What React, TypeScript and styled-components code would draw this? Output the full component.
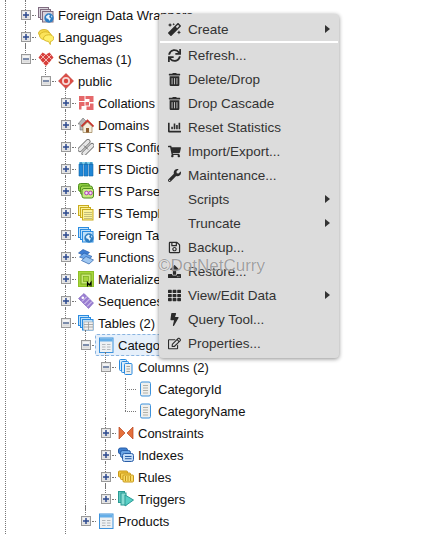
import React from "react";
import styled, { createGlobalStyle } from "styled-components";
import { FaMagic, FaSync, FaTrashAlt, FaChartBar, FaShoppingCart, FaWrench, FaRegSave, FaUpload, FaTh, FaBolt, FaRegEdit } from "react-icons/fa";

const Global = createGlobalStyle`
  html, body { margin: 0; padding: 0; height: 534px; overflow: hidden; background: #fff; }
  #root { height: 534px; }
`;

const Page = styled.div`
  position: relative;
  width: 426px;
  height: 534px;
  overflow: hidden;
  font-family: "Liberation Sans", Arial, sans-serif;
`;
const Tree = styled.div`
  margin-left: 5px;
  height: 534px;
  border-left: 1px dotted #777;
  padding: 4px 0 0 19px;
  box-sizing: border-box;
`;
const List = styled.ul`
  list-style: none;
  margin: 0;
  padding: 0;
`;
const SubList = styled(List)`
  margin-left: 20px;
`;
const Item = styled.li<{ $last?: boolean; $leaf?: boolean; $tail?: boolean }>`
  position: relative;
  padding-bottom: ${(p) => (p.$tail ? "30px" : "0")};
  &::before {
    content: "";
    position: absolute;
    left: 0;
    top: ${(p) => (p.$leaf ? "0" : "-4px")};
    ${(p) => (p.$last ? `height: ${p.$leaf ? 11 : 15}px;` : "bottom: 0;")}
    border-left: 1px dotted #777;
  }
`;
const Row = styled.div`
  position: relative;
  display: flex;
  align-items: center;
  height: 22px;
`;
const Toggle = styled.span<{ $open?: boolean }>`
  position: relative;
  flex: none;
  width: 10px;
  height: 10px;
  box-sizing: border-box;
  margin-left: -4px;
  border: 1px solid #999;
  background: linear-gradient(#fff, #d4d4d4);
  box-shadow: inset 0 0 0 1px #e6e6e6;
  &::before {
    content: "";
    position: absolute;
    left: 1px;
    top: 3px;
    width: 6px;
    height: 2px;
    background: ${(p) => (p.$open ? "#5a6f96" : "#2c4a8e")};
    transform: scaleY(0.75);
  }
  &::after {
    content: "";
    display: ${(p) => (p.$open ? "none" : "block")};
    position: absolute;
    left: 3px;
    top: 1px;
    width: 2px;
    height: 6px;
    background: #2c4a8e;
    transform: scaleX(0.75);
  }
`;
const Dots = styled.span<{ $leaf?: boolean }>`
  flex: none;
  width: ${(p) => (p.$leaf ? "11px" : "4px")};
  margin-left: ${(p) => (p.$leaf ? "0" : "1px")};
  margin-right: 2px;
  border-top: 1px dotted #777;
`;
const Label = styled.span<{ $selected?: boolean }>`
  display: flex;
  align-items: center;
  gap: 4px;
  height: 22px;
  box-sizing: border-box;
  padding: 0 2px;
  margin-left: -3px;
  border: 1px ${(p) => (p.$selected ? "dashed #8ab4e0" : "solid transparent")};
  background: ${(p) => (p.$selected ? "#e6f0fb" : "transparent")};
  border-radius: 2px;
  font-size: 13px;
  color: #111;
  white-space: nowrap;
`;
const Ico = styled.svg`
  flex: none;
  width: 16px;
  height: 16px;
  display: block;
`;

const Menu = styled.div`
  position: absolute;
  left: 159px;
  top: 14px;
  width: 180px;
  box-sizing: border-box;
  padding: 3px 0;
  background: #dcdcdc;
  border-radius: 4px;
  box-shadow: 0 1px 4px rgba(0, 0, 0, 0.45);
`;
const MenuItem = styled.div`
  display: flex;
  align-items: center;
  height: 24px;
  color: #333;
  font-size: 13.5px;
`;
const MenuIcon = styled.span`
  flex: none;
  width: 29px;
  padding-left: 1px;
  box-sizing: border-box;
  display: flex;
  justify-content: center;
  color: #2b2b2b;
  font-size: 13px;
`;
const MenuText = styled.span`
  flex: 1;
  white-space: nowrap;
`;
const Arrow = styled.span`
  flex: none;
  width: 0;
  height: 0;
  margin-right: 9px;
  border-left: 5px solid #333;
  border-top: 4px solid transparent;
  border-bottom: 4px solid transparent;
`;
const Divider = styled.div`
  height: 2px;
  margin: 0 1px;
  background: #fff;
`;
const Watermark = styled.div`
  position: absolute;
  left: 158px;
  top: 256px;
  font-size: 17px;
  line-height: 20px;
  color: rgba(120, 120, 120, 0.7);
  text-shadow: 0 0 1px rgba(255, 255, 255, 0.95);
  white-space: nowrap;
`;

const stack = (fill: string, stroke: string, inner?: React.ReactNode) => (
  <Ico viewBox="0 0 16 16">
    <rect x="0.5" y="0.5" width="10" height="10" fill={fill} stroke={stroke} />
    <rect x="2.5" y="2.5" width="10" height="10" fill={fill} stroke={stroke} />
    <rect x="4.5" y="4.5" width="10.5" height="10.5" fill={fill} stroke={stroke} />
    {inner}
  </Ico>
);
const globe = (
  <>
    <circle cx="11" cy="11" r="4.7" fill="#2f7fc4" />
    <path d="M8 9.5l2.5-2 1.5 1-1 1.6 1.8 1.4-1.3 2.6-1.2-2.2-2-.6zM13 8l1.500 2-1.200.4z" fill="#e6f2fb" />
  </>
);
const miniTable = (
  <>
    <rect x="6" y="7" width="9" height="8" fill="#f1f1f1" stroke="#aaa" strokeWidth="0.6" />
    <path d="M6 9.5h9M6 12h9M10.5 7v8" stroke="#999" strokeWidth="0.8" />
  </>
);
const tableIcon = (
  <Ico viewBox="0 0 16 16">
    <rect x="1.5" y="1" width="13.5" height="14.5" fill="#eef1f3" stroke="#3d92dc" />
    <rect x="2" y="1.5" width="12.5" height="3" fill="#64aee8" />
    <path d="M4 7.5h3.5M9 7.5h3.5M4 10h3.5M9 10h3.5M4 12.5h3.5M9 12.5h3.5" stroke="#b3b8bc" />
  </Ico>
);
const columnIcon = (
  <Ico viewBox="0 0 16 16">
    <rect x="2.5" y="1" width="10" height="14" rx="1.5" fill="#f0f0ee" stroke="#3d92dc" />
    <path d="M5 4.5h5M5 7h5M5 9.5h5M5 12h5" stroke="#b0b0a8" />
  </Ico>
);

const icons: Record<string, React.ReactNode> = {
  fdw: stack("#d9d4dc", "#7f6c80", globe),
  lang: (
    <Ico viewBox="0 0 16 16">
      <ellipse cx="6" cy="4.200" rx="5.500" ry="3.700" fill="#f5d94a" stroke="#d0ad1e" strokeWidth="0.8" />
      <ellipse cx="7.500" cy="6.800" rx="6" ry="4" fill="#fbe35a" stroke="#d0ad1e" strokeWidth="0.8" />
      <path d="M10.500 5.800c3-.3 5.200 1.200 5.200 3.400 0 1.800-1.400 3-3.200 3.300L12.300 15.500l-1.800-3C7.500 12.200 5.500 11 5.500 9.200c0-1.900 2.300-3.200 5-3.400z" fill="#fff06a" stroke="#d0ad1e" strokeWidth="0.8" />
    </Ico>
  ),
  schemas: (
    <Ico viewBox="0 0 16 16">
      <clipPath id="schemaClip">
        <path d="M4.500 1.500L8 3.500l3.500-2 4 5-3 3.500L8 15.500 3.500 10 .5 6.500z" />
      </clipPath>
      <path d="M4.500 1.500L8 3.500l3.500-2 4 5-3 3.500L8 15.500 3.500 10 .5 6.500z" fill="#d8403c" />
      <g clipPath="url(#schemaClip)" stroke="#f6c6c2" strokeWidth="0.9">
        <path d="M-2 5l12 12M1 2l12 12M4 -1l12 12M18 5L6 17M15 2L3 14M12 -1L0 11" />
      </g>
    </Ico>
  ),
  public: (
    <Ico viewBox="0 0 16 16">
      <path d="M8 .5L15.500 8 8 15.500.5 8z" fill="#dd4d45" stroke="#b8302c" strokeWidth="0.6" />
      <circle cx="8" cy="8" r="4" fill="#f6d9d6" />
      <circle cx="8" cy="8" r="2.200" fill="#d9453e" />
    </Ico>
  ),
  collations: (
    <Ico viewBox="0 0 16 16">
      <path d="M1 1h5.500v5H1zM7.500 1H15.500v6h-4V4h-4zM1 7h5.500v4H3.500v3.500H1zM7.500 7H11v3.500H7.500zM12 8.500h3.500V15H8.500v-3.500H12z" fill="#e5686a" />
    </Ico>
  ),
  domains: (
    <Ico viewBox="0 0 16 16">
      <path d="M0 7l5-6 5 5v7H2V7z" fill="#b8b8b8" stroke="#6e6e6e" strokeWidth="0.6" />
      <path d="M3.500 9.500L9.500 3.500l6 6" fill="none" stroke="#c8322c" strokeWidth="1.800" />
      <path d="M5 9.500l4.500-4.500 4.500 4.500V15.500H5z" fill="#f6eedd" stroke="#8a6d3b" strokeWidth="0.6" />
      <rect x="8" y="11" width="3" height="4.500" fill="#8d5a2b" />
    </Ico>
  ),
  ftsConfig: (
    <Ico viewBox="0 0 16 16">
      <path d="M2 10.500L10 2.500M6 14.500l8-8" stroke="#6e6e6e" strokeWidth="5" strokeLinecap="round" />
      <path d="M2 10.500L10 2.500M6 14.500l8-8" stroke="#e6e6e6" strokeWidth="3.200" strokeLinecap="round" />
      <path d="M6 6.500l4 4" stroke="#6e6e6e" strokeWidth="1" />
    </Ico>
  ),
  ftsDict: (
    <Ico viewBox="0 0 16 16">
      <rect x="1" y="1" width="14" height="3" fill="#7fd0ea" />
      <path d="M1 3h4v12H1zM6 3h4v12H6zM11 3h4v12h-4z" fill="#1f86d6" stroke="#1466a8" strokeWidth="0.6" />
      <path d="M3 1v3M8 1v3M13 1v3" stroke="#1466a8" />
    </Ico>
  ),
  ftsParser: (
    <Ico viewBox="0 0 16 16">
      <rect x="0.500" y="0.500" width="11" height="8" rx="2" fill="#8ccb3e" stroke="#4f8e1e" />
      <rect x="2.500" y="3" width="12" height="8.500" rx="2" fill="#a8dc58" stroke="#4f8e1e" />
      <rect x="4" y="5.500" width="11.500" height="9.500" rx="2" fill="#c8ec84" stroke="#4f8e1e" />
      <circle cx="8.500" cy="10" r="1.800" fill="#f6e0f6" stroke="#b03ab8" />
      <circle cx="12.500" cy="10" r="1.800" fill="#f6e0f6" stroke="#b03ab8" />
    </Ico>
  ),
  ftsTemplates: stack("#fbf29a", "#c9ab1e",
    <path d="M6.500 7.500h7M6.500 9.500h7M6.500 11.500h7M6.500 13.500h7" stroke="#8a8a60" strokeDasharray="1 1" />),
  foreignTables: stack("#bfe0f8", "#2a8be0", globe),
  functions: (
    <Ico viewBox="0 0 16 16">
      <path d="M.5 4L5 .5l6.500 3L7 7z" fill="#3f7ed4" stroke="#2a5ea8" strokeWidth="0.7" />
      <path d="M1.500 8L6 4l8 3.500L9.500 11z" fill="#6fa8ea" stroke="#2a5ea8" strokeWidth="0.7" />
      <path d="M3.500 11.500L8 7.500l7.500 3.500L11 15z" fill="#a0c8f2" stroke="#2a5ea8" strokeWidth="0.7" />
    </Ico>
  ),
  materialized: (
    <Ico viewBox="0 0 16 16">
      <rect x="0.500" y="0.500" width="15" height="15" fill="#a6d63c" stroke="#8fc028" />
      <rect x="3" y="3" width="10" height="10" fill="#c8e878" stroke="#7ba820" />
      <rect x="5.500" y="5.500" width="5" height="5" fill="#a6d63c" stroke="#7ba820" strokeWidth="0.7" />
      <path d="M9.500 15.500v-4l1.800 2.500 1.700-2.500v4" fill="none" stroke="#000" strokeWidth="1.200" />
    </Ico>
  ),
  sequences: (
    <Ico viewBox="0 0 16 16">
      <path d="M.5 5.500L6 .5l9.500 9.500-5 5.500z" fill="#9a7ed2" stroke="#7a5eb8" strokeWidth="0.6" />
      <path d="M4 8.500L9 3.500M6.500 11L11.500 6M9 13.500l5-5" stroke="#e6dcf6" />
      <circle cx="4.800" cy="4.800" r="1.300" fill="#fff" />
    </Ico>
  ),
  tables: stack("#bfe0f8", "#2a8be0", miniTable),
  table: tableIcon,
  columns: (
    <Ico viewBox="0 0 16 16">
      <rect x="1.500" y="0.500" width="7" height="11" rx="1" fill="#d8ecfa" stroke="#2a8be0" />
      <rect x="3.500" y="2.500" width="7" height="11" rx="1" fill="#d8ecfa" stroke="#2a8be0" />
      <rect x="6.500" y="4.500" width="7.500" height="11" rx="1" fill="#f0f0ee" stroke="#2a8be0" />
      <path d="M8.500 7.500h3.500M8.500 10h3.500M8.500 12.500h3.500" stroke="#a8a8a0" />
    </Ico>
  ),
  column: columnIcon,
  constraints: (
    <Ico viewBox="0 0 16 16">
      <path d="M1 2l6 6-6 6z" fill="#e4703c" stroke="#b8431e" strokeWidth="0.7" />
      <path d="M15 2L9 8l6 6z" fill="#e4703c" stroke="#b8431e" strokeWidth="0.7" />
    </Ico>
  ),
  indexes: (
    <Ico viewBox="0 0 16 16">
      <rect x="0.500" y="1" width="9" height="6" rx="2" fill="#3d7fd0" stroke="#2a5ea8" />
      <rect x="2.500" y="3.500" width="10" height="7" rx="2" fill="#6ba4e4" stroke="#2a5ea8" />
      <rect x="4.500" y="6.500" width="11" height="8" rx="2" fill="#c4dcf6" stroke="#2a5ea8" />
      <path d="M7 9.500h6.500M7 11.700h6.500" stroke="#2a5ea8" />
    </Ico>
  ),
  rules: (
    <Ico viewBox="0 0 16 16">
      <rect x="0.500" y="2" width="9" height="6" rx="1" fill="#f2c53c" stroke="#c8981a" />
      <rect x="2.500" y="4" width="10" height="6.500" rx="1" fill="#f6d050" stroke="#c8981a" />
      <rect x="5" y="6" width="10.500" height="7" rx="1" fill="#f9dc68" stroke="#c8981a" />
      <path d="M7.500 7v5M10 7v5M12.500 7v5" stroke="#c8981a" />
    </Ico>
  ),
  triggers: (
    <Ico viewBox="0 0 16 16">
      <rect x="0.500" y="0.500" width="6" height="11" fill="#5fc8c0" stroke="#2a9a94" />
      <rect x="3" y="2" width="5" height="12" fill="#8adcd4" stroke="#2a9a94" />
      <path d="M7 4l8.500 5L7 15z" fill="#58cfc6" stroke="#2a9a94" />
    </Ico>
  ),
};

type TreeNode = {
  label: string;
  icon: string;
  open?: boolean;
  last?: boolean;
  leaf?: boolean;
  tail?: boolean;
  selected?: boolean;
  children?: TreeNode[];
};

const tree: TreeNode[] = [
  { label: "Foreign Data Wrappers", icon: "fdw" },
  { label: "Languages", icon: "lang" },
  {
    label: "Schemas (1)", icon: "schemas", open: true, last: true,
    children: [
      {
        label: "public", icon: "public", open: true, last: true,
        children: [
          { label: "Collations", icon: "collations" },
          { label: "Domains", icon: "domains" },
          { label: "FTS Configurations", icon: "ftsConfig" },
          { label: "FTS Dictionaries", icon: "ftsDict" },
          { label: "FTS Parsers", icon: "ftsParser" },
          { label: "FTS Templates", icon: "ftsTemplates" },
          { label: "Foreign Tables", icon: "foreignTables" },
          { label: "Functions", icon: "functions" },
          { label: "Materialized Views", icon: "materialized" },
          { label: "Sequences", icon: "sequences" },
          {
            label: "Tables (2)", icon: "tables", open: true, tail: true,
            children: [
              {
                label: "Categories", icon: "table", open: true, selected: true,
                children: [
                  {
                    label: "Columns (2)", icon: "columns", open: true,
                    children: [
                      { label: "CategoryId", icon: "column", leaf: true },
                      { label: "CategoryName", icon: "column", leaf: true, last: true },
                    ],
                  },
                  { label: "Constraints", icon: "constraints" },
                  { label: "Indexes", icon: "indexes" },
                  { label: "Rules", icon: "rules" },
                  { label: "Triggers", icon: "triggers", last: true },
                ],
              },
              { label: "Products", icon: "table", last: true },
            ],
          },
        ],
      },
    ],
  },
];

function Node({ node }: { node: TreeNode }) {
  return (
    <Item $last={node.last} $leaf={node.leaf} $tail={node.tail}>
      <Row>
        {node.leaf ? <Dots $leaf /> : (
          <>
            <Toggle $open={node.open} />
            <Dots />
          </>
        )}
        <Label $selected={node.selected}>{icons[node.icon]}{node.label}</Label>
      </Row>
      {node.children && (
        <SubList>
          {node.children.map((c) => <Node key={c.label} node={c} />)}
        </SubList>
      )}
    </Item>
  );
}

type Entry = { text: string; icon?: React.ReactNode; sub?: boolean };
const entries: Entry[] = [
  { text: "Refresh...", icon: <FaSync /> },
  { text: "Delete/Drop", icon: <FaTrashAlt /> },
  { text: "Drop Cascade", icon: <FaTrashAlt /> },
  { text: "Reset Statistics", icon: <FaChartBar /> },
  { text: "Import/Export...", icon: <FaShoppingCart /> },
  { text: "Maintenance...", icon: <FaWrench /> },
  { text: "Scripts", sub: true },
  { text: "Truncate", sub: true },
  { text: "Backup...", icon: <FaRegSave /> },
  { text: "Restore...", icon: <FaUpload /> },
  { text: "View/Edit Data", icon: <FaTh />, sub: true },
  { text: "Query Tool...", icon: <FaBolt /> },
  { text: "Properties...", icon: <FaRegEdit /> },
];

function MenuEntry({ e }: { e: Entry }) {
  return (
    <MenuItem>
      <MenuIcon>{e.icon}</MenuIcon>
      <MenuText>{e.text}</MenuText>
      {e.sub && <Arrow />}
    </MenuItem>
  );
}

export default function App() {
  return (
    <Page>
      <Global />
      <Tree>
        <List>
          {tree.map((n) => <Node key={n.label} node={n} />)}
        </List>
      </Tree>
      <Menu>
        <MenuEntry e={{ text: "Create", icon: <FaMagic />, sub: true }} />
        <Divider />
        {entries.map((e) => <MenuEntry key={e.text} e={e} />)}
      </Menu>
      <Watermark>©DotNetCurry</Watermark>
    </Page>
  );
}
